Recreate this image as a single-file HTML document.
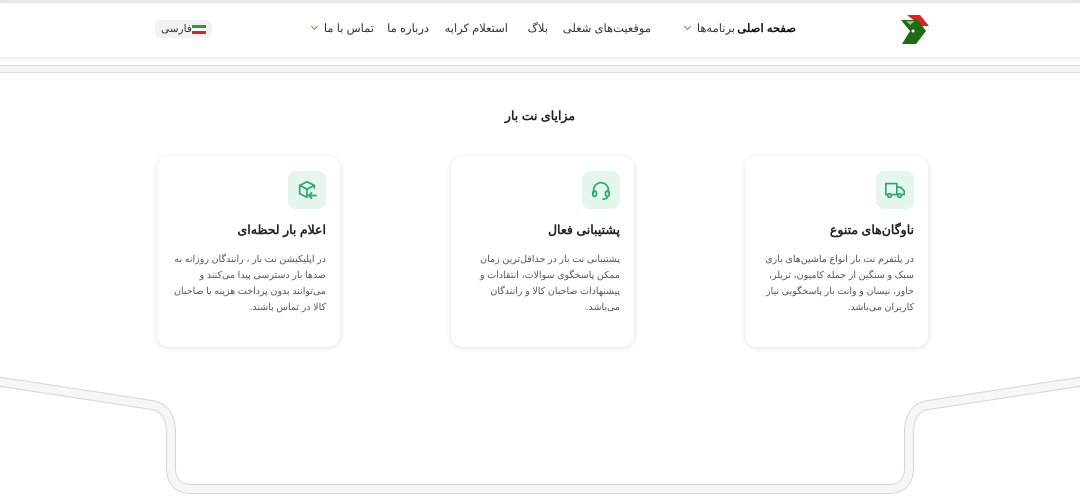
<!DOCTYPE html>
<html lang="fa" dir="rtl"><head><meta charset="utf-8"><style>
*{margin:0;padding:0;box-sizing:border-box}
body{width:1080px;height:502px;overflow:hidden;background:#fff;font-family:"Liberation Sans","Noto Sans CJK SC",sans-serif;color:#222;position:relative}
.a{position:absolute;white-space:nowrap}
.top{position:absolute;left:0;top:0;width:1080px;height:3px;background:#e8e8e8}
.hdr{position:absolute;left:0;top:3px;width:1080px;height:55px;background:#fff;box-shadow:0 2px 4px rgba(0,0,0,.06);border-bottom:1px solid #eee}
.band{position:absolute;left:0;top:65px;width:1080px;height:8px;background:#f6f6f6;border-top:1px solid #ddd;border-bottom:1px solid #ddd}
.nav{font-size:11.5px;color:#333;top:21px}
.chev{display:inline-block;width:5px;height:5px;border-right:1px solid #777;border-bottom:1px solid #777;transform:rotate(45deg);margin-right:7px;vertical-align:3px}
.card{position:absolute;top:156px;width:183px;height:191px;border-radius:12px;background:#fff;box-shadow:0 1px 6px rgba(0,0,0,.12)}
.ic{position:absolute;right:14px;top:15px;width:38px;height:38px;border-radius:8px;background:#e5f6ed}
.ic svg{position:absolute;left:8px;top:8px}
.ct{position:absolute;right:14px;top:66px;font-size:12.5px;font-weight:bold;color:#222;white-space:nowrap}
.cb{position:absolute;right:14px;top:96px;width:160px;font-size:9.5px;line-height:16px;color:#555;text-align:right}
</style></head><body>
<div class="top"></div>
<div class="hdr"></div>
<div class="band"></div>
<svg class="a" style="left:898px;top:13px" width="32" height="32" viewBox="0 0 32 32"><polygon points="9,2 22,2 31,13 23,13" fill="#e62020"/><polygon points="3,7 20,7 28,18 18,31 4,31 12,18" fill="#1f6b10"/><polygon points="8,8 17,8 12,12" fill="#aaa"/><circle cx="15" cy="18" r="1.5" fill="#fff"/></svg>
<div class="a nav" style="right:284px;font-weight:bold;color:#111">صفحه اصلی</div>
<div class="a nav" style="right:345px">برنامه‌ها<span class="chev"></span></div>
<div class="a nav" style="right:429px">موقعیت‌های شغلی</div>
<div class="a nav" style="right:532px">بلاگ</div>
<div class="a nav" style="right:572px">استعلام کرایه</div>
<div class="a nav" style="right:651px">درباره ما</div>
<div class="a nav" style="right:706px">تماس با ما<span class="chev" style="border-color:#b07a30"></span></div>
<div class="a" style="left:155px;top:20px;width:57px;height:18px;border-radius:6px;background:#f2f2f2">
<span style="position:absolute;left:192px;left:37px;top:5px;width:14px;height:9px;background:linear-gradient(#2a9d3a 33%,#fff 33%,#fff 66%,#e02020 66%)"></span>
<span style="position:absolute;left:6px;top:2px;font-size:10.5px;color:#333;line-height:14px">فارسی</span></div>
<div class="a" style="left:0;width:1080px;text-align:center;top:108px;font-size:12.5px;font-weight:bold;color:#222">مزایای نت بار</div>

<div class="card" style="left:745px"><div class="ic"><svg width="22" height="22" viewBox="0 0 24 24" fill="none" stroke="#27a86a" stroke-width="1.8" stroke-linejoin="round"><path d="M2 5h12v12H2zM14 9h4l4 4v4h-8"/><circle cx="6" cy="18" r="2" fill="#e5f6ed"/><circle cx="17" cy="18" r="2" fill="#e5f6ed"/></svg></div>
<div class="ct">ناوگان‌های متنوع</div>
<div class="cb">در پلتفرم نت بار انواع ماشین‌های باری سبک و سنگین از جمله کامیون، تریلر، خاور، نیسان و وانت بار پاسخگوبی نیاز کاربران می‌باشد.</div></div>

<div class="card" style="left:451px"><div class="ic"><svg width="22" height="22" viewBox="0 0 24 24" fill="none" stroke="#27a86a" stroke-width="1.8" stroke-linecap="round"><path d="M4 15v-3a8 8 0 0 1 16 0v3"/><rect x="3" y="13" width="4" height="6" rx="2"/><rect x="17" y="13" width="4" height="6" rx="2"/><path d="M19 19c0 2-2 3-5 3"/></svg></div>
<div class="ct">پشتیبانی فعال</div>
<div class="cb">پشتیبانی نت بار در حداقل‌ترین زمان ممکن پاسخگوی سوالات، انتقادات و پیشنهادات صاحبان کالا و رانندگان می‌باشد.</div></div>

<div class="card" style="left:157px"><div class="ic"><svg width="22" height="22" viewBox="0 0 24 24" fill="none" stroke="#27a86a" stroke-width="1.8" stroke-linecap="round" stroke-linejoin="round"><path d="M20 10V7l-8-4-8 4v9l8 4M4 7l8 4 8-4M12 11v9"/><path d="M22 18h-7M17 15l-3 3 3 3"/></svg></div>
<div class="ct">اعلام بار لحظه‌ای</div>
<div class="cb">در اپلیکیشن نت بار ، رانندگان روزانه به صدها بار دسترسی پیدا می‌کنند و می‌توانند بدون پرداخت هزینه با صاحبان کالا در تماس باشند.</div></div>

<svg class="a" style="left:0;top:0" width="1080" height="502"><g fill="none"><path d="M-5 381 L152 405 Q171 409 171 432 L171 468 Q171 489 192 489 L888 489 Q909 489 909 468 L909 432 Q909 409 928 405 L1085 381" stroke="#d6d6d6" stroke-width="10"/><path d="M-5 381 L152 405 Q171 409 171 432 L171 468 Q171 489 192 489 L888 489 Q909 489 909 468 L909 432 Q909 409 928 405 L1085 381" stroke="#f7f7f7" stroke-width="8"/></g></svg>
</body></html>
